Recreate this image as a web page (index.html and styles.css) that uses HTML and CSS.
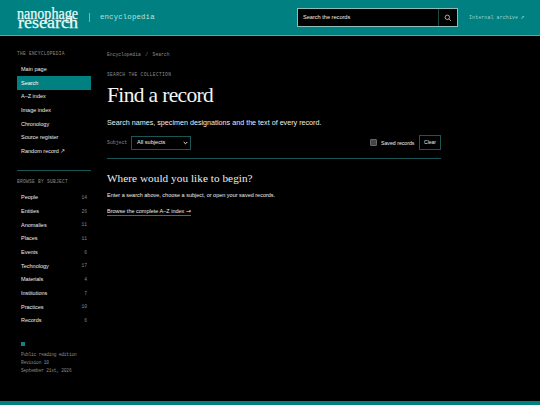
FILE: index.html
```html
<!DOCTYPE html>
<html lang="en">
<head>
<meta charset="utf-8">
<title>Find a record</title>
<link rel="stylesheet" href="styles.css">
</head>
<body>
<header class="top">
  <svg class="logo" viewBox="0 0 62 24" role="img" aria-label="nanophage research">
    <text x="0" y="12.6" textLength="61" lengthAdjust="spacingAndGlyphs">nanophage</text>
    <text x="1" y="22.3" textLength="60" lengthAdjust="spacingAndGlyphs">research</text>
  </svg>
  <span class="rule"></span>
  <span class="section">encyclopedia</span>
  <form class="search">
    <span class="field">Search the records</span>
    <span class="go"><svg viewBox="0 0 8 8"><circle cx="3.3" cy="3.3" r="2.2"/><path d="M5 5 7 7"/></svg></span>
  </form>
  <a class="archive">Internal archive <b>↗</b></a>
</header>
<div class="layout">
  <aside class="side">
    <h2 class="label">THE ENCYCLOPEDIA</h2>
    <nav class="list">
      <a>Main page</a><a class="active">Search</a><a>A–Z index</a><a>Image index</a><a>Chronology</a><a>Source register</a><a>Random record ↗</a>
    </nav>
    <h2 class="label second">BROWSE BY SUBJECT</h2>
    <nav class="list">
      <a>People<i>14</i></a><a>Entities<i>26</i></a><a>Anomalies<i>11</i></a><a>Places<i>11</i></a><a>Events<i>6</i></a><a>Technology<i>17</i></a><a>Materials<i>4</i></a><a>Institutions<i>7</i></a><a>Practices<i>10</i></a><a>Records<i>6</i></a>
    </nav>
    <div class="edition"><b></b><span>Public reading edition</span><span>Revision 10</span><span>September 21st, 2026</span></div>
  </aside>
  <main class="main">
    <div class="crumbs"><span>Encyclopedia</span><span>/</span><span>Search</span></div>
    <div class="eyebrow">SEARCH THE COLLECTION</div>
    <h1>Find a record</h1>
    <p class="lead">Search names, specimen designations and the text of every record.</p>
    <div class="filters">
      <span class="subject">Subject</span>
      <span class="select">All subjects<svg viewBox="0 0 5 4"><path d="M.7 1 2.5 2.8 4.3 1"/></svg></span>
      <span class="box"></span><span class="saved">Saved records</span>
      <span class="clear">Clear</span>
    </div>
    <h2 class="begin">Where would you like to begin?</h2>
    <p class="hint">Enter a search above, choose a subject, or open your saved records.</p>
    <a class="browse">Browse the complete A–Z index <b>→</b></a>
  </main>
</div>
<footer class="foot"></footer>
</body>
</html>
```
FILE: styles.css
```css
* { box-sizing: border-box; }
body { margin: 0; height: 405px; display: flex; flex-direction: column; overflow: hidden; background: #000; color: #eee; font: 5.5px/1 "Liberation Sans", sans-serif; white-space: nowrap; }
h1, h2, p { margin: 0; font-weight: 400; }
.top { flex: none; height: 36px; padding: 0 16px 0 17px; display: flex; align-items: center; background: #008080; border-bottom: 1px solid #55aaa8; }
.logo { width: 62px; height: 24px; fill: #e9fbf8; stroke: #e9fbf8; stroke-width: .25; font: 16px "Liberation Serif", serif; overflow: visible; }
.rule { width: 1px; height: 9px; margin-left: 10px; background: #6dbbb8; }
.section { margin-left: 10px; font: 7.3px/9px "Liberation Mono", monospace; letter-spacing: .18px; color: #b5e3e0; }
.search { margin-left: auto; width: 161px; height: 19px; display: flex; background: #000; border: 1px solid #8dbdba; }
.field { flex: 1; padding-left: 5px; line-height: 17px; font-size: 5.6px; }
.go { width: 19px; display: flex; align-items: center; justify-content: center; border-left: 1px solid #174848; }
.go svg { width: 8px; height: 8px; fill: none; stroke: #ddd; stroke-width: .75; }
.archive { width: 55px; margin-left: 11px; font: 4.8px/8px "Liberation Mono", monospace; letter-spacing: .19px; color: #a2d6d4; }
.archive b { margin-left: -1px; font: 5px/8px "DejaVu Sans", sans-serif; }
.layout { flex: 1; display: flex; }
.side { width: 74px; margin-left: 17px; padding-top: 15px; }
.label { font: 4.6px/6px "Liberation Mono", monospace; letter-spacing: .22px; color: #8a8a8a; }
.list { display: flex; flex-direction: column; margin-top: 5.4px; }
.list a { height: 13.7px; padding: 1px 4px 0; display: flex; align-items: center; justify-content: space-between; }
.list .active { background: #008080; color: #fff; }
.list i { font: 4.6px/6px "Liberation Mono", monospace; color: #8a8a8a; }
.second { margin-top: 12px; padding-top: 8px; border-top: 1px solid #1c5555; letter-spacing: .25px; }
.edition { margin: 15px 0 0 4px; display: flex; flex-direction: column; font: 4.5px/8.15px "Liberation Mono", monospace; letter-spacing: -.18px; color: #8a8a8a; }
.edition b { width: 4px; height: 4px; margin-bottom: 4.5px; background: #168080; }
.main { width: 334px; margin-left: 16px; padding-top: 15px; }
.crumbs { display: flex; gap: 4.5px; font: 4.7px/7px "Liberation Mono", monospace; color: #8a8a8a; }
.eyebrow { margin-top: 14px; font: 4.6px/6px "Liberation Mono", monospace; letter-spacing: .3px; color: #8a8a8a; }
h1 { margin-top: 5px; font: 21.5px/24px "Liberation Serif", serif; letter-spacing: -.65px; color: #f5f5f5; }
.lead { margin-top: 10.5px; font-size: 7.18px; line-height: 10px; }
.filters { display: flex; align-items: center; height: 31.5px; border-bottom: 1px solid #1c5555; }
.subject { width: 24px; font: 4.8px/7px "Liberation Mono", monospace; color: #8a8a8a; }
.select { width: 60px; height: 14px; padding: 1px 2px 0 5px; display: flex; align-items: center; justify-content: space-between; border: 1px solid #1c5555; font-size: 5.6px; }
.select svg { width: 5px; height: 4px; fill: none; stroke: #eee; stroke-width: 1; }
.box { width: 7px; height: 7px; margin-left: auto; background: #454545; border: 1px solid #666; border-radius: 1px; }
.saved { width: 34px; margin-left: 4px; padding-top: 1px; font-size: 5.2px; }
.clear { width: 22px; height: 15px; margin-left: 4px; display: flex; align-items: center; justify-content: center; border: 1px solid #1c5555; font-size: 5px; }
.begin { margin-top: 11.5px; font: 11.2px/14px "Liberation Serif", serif; letter-spacing: .06px; color: #eee; }
.hint { margin-top: 6.5px; line-height: 8px; }
.browse { display: inline-block; margin-top: 9px; line-height: 7px; border-bottom: 1px solid #2c7777; }
.browse b { font: 6px/6px "DejaVu Sans", sans-serif; }
.foot { flex: none; height: 4px; background: #008080; }
```
